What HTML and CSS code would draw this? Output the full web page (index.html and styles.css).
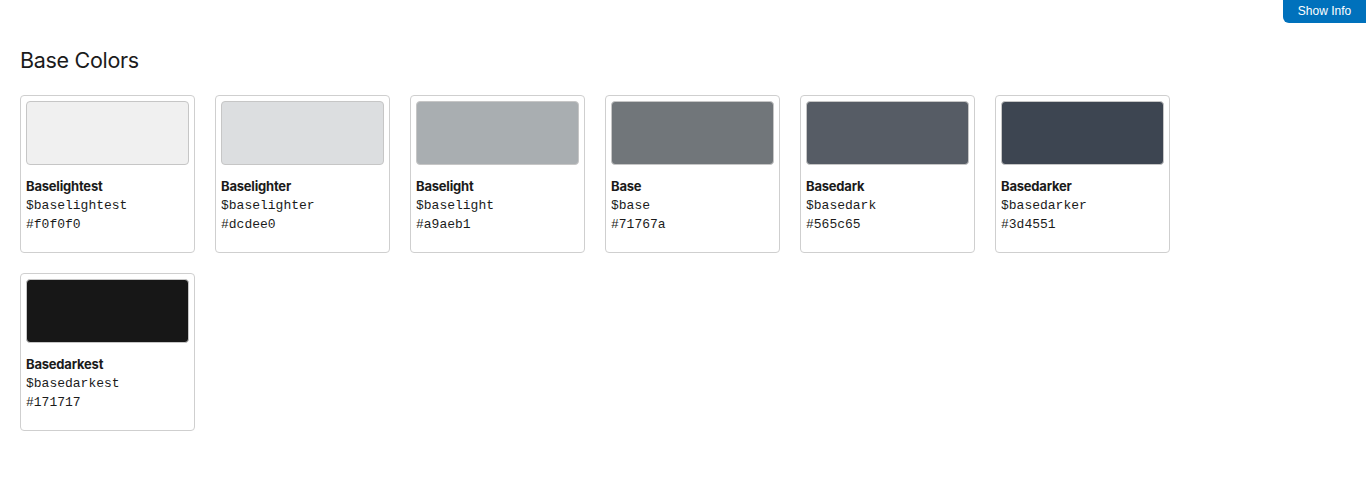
FILE: index.html
```html
<!DOCTYPE html>
<html>
<head>
<meta charset="utf-8">
<link rel="stylesheet" href="styles.css">
</head>
<body>
<button class="info-btn">Show Info</button>
<main class="page">
  <h1 class="title">Base Colors</h1>
  <div class="grid">
    <div class="card"><div class="swatch" style="background:#f0f0f0"></div><div class="name">Baselightest</div><div class="code">$baselightest</div><div class="code">#f0f0f0</div></div>
    <div class="card"><div class="swatch" style="background:#dcdee0"></div><div class="name">Baselighter</div><div class="code">$baselighter</div><div class="code">#dcdee0</div></div>
    <div class="card"><div class="swatch" style="background:#a9aeb1"></div><div class="name">Baselight</div><div class="code">$baselight</div><div class="code">#a9aeb1</div></div>
    <div class="card"><div class="swatch" style="background:#71767a"></div><div class="name">Base</div><div class="code">$base</div><div class="code">#71767a</div></div>
    <div class="card"><div class="swatch" style="background:#565c65"></div><div class="name">Basedark</div><div class="code">$basedark</div><div class="code">#565c65</div></div>
    <div class="card"><div class="swatch" style="background:#3d4551"></div><div class="name">Basedarker</div><div class="code">$basedarker</div><div class="code">#3d4551</div></div>
    <div class="card"><div class="swatch" style="background:#171717"></div><div class="name">Basedarkest</div><div class="code">$basedarkest</div><div class="code">#171717</div></div>
  </div>
</main>
</body>
</html>
```
FILE: styles.css
```css
html, body {
  margin: 0;
  padding: 0;
  background: #fff;
}
body {
  font-family: "Inter", "Liberation Sans", sans-serif;
  color: #1b1b1b;
}
.info-btn {
  position: absolute;
  top: 0;
  right: 0;
  width: 83px;
  height: 23px;
  border: 0;
  border-radius: 0 0 0 6px;
  background: #0071bc;
  color: #fff;
  font-family: "Liberation Sans", Arial, sans-serif;
  font-size: 12px;
  padding: 0 0 2px;
  cursor: pointer;
}
.page {
  padding: 44px 20px 20px;
}
.title {
  margin: 0 0 19px;
  font-size: 21.5px;
  font-weight: 400;
  line-height: 32px;
  color: #1b1b1b;
  letter-spacing: -0.3px;
}
.grid {
  display: grid;
  grid-template-columns: repeat(6, 175px);
  gap: 20px;
}
.card {
  box-sizing: border-box;
  width: 175px;
  height: 158px;
  border: 1px solid #cfcfcf;
  border-radius: 4px;
  padding: 5px;
}
.swatch {
  height: 62px;
  border: 1px solid #c6c6c6;
  border-radius: 4px;
  margin-bottom: 12px;
}
.name {
  font-size: 13px;
  font-weight: 700;
  line-height: 19px;
  letter-spacing: -0.2px;
}
.code {
  font-family: "Liberation Mono", "Courier New", monospace;
  font-size: 13px;
  line-height: 19px;
  color: #1b1b1b;
}
```
